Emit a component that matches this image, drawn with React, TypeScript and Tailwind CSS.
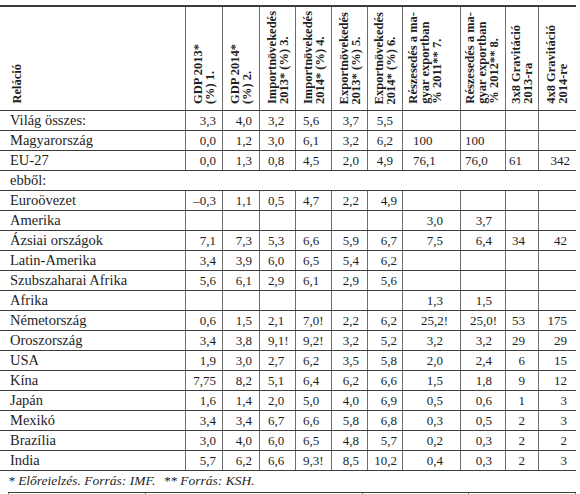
import React from "react";

const wClasses = [
  "w-[185px]",
  "w-[37px]",
  "w-[37px]",
  "w-[36px]",
  "w-[36px]",
  "w-[36px]",
  "w-[35px]",
  "w-[58px]",
  "w-[45px]",
  "w-[33px]",
  "w-[38px]",
];

const headers: string[][] = [
  ["Reláció"],
  ["GDP 2013*", "(%) 1."],
  ["GDP 2014*", "(%) 2."],
  ["Importnövekedés", "2013* (%) 3."],
  ["Importnövekedés", "2014* (%) 4."],
  ["Exportnövekedés", "2013* (%) 5."],
  ["Exportnövekedés", "2014* (%) 6."],
  ["Részesedés a ma-", "gyar exportban", "% 2011** 7."],
  ["Részesedés a ma-", "gyar exportban", "% 2012** 8."],
  ["3x8 Gravitáció", "2013-ra"],
  ["4x8 Gravitáció", "2014-re"],
];

const headerPos = [
  "pl-[11px]",
  "justify-center",
  "justify-center",
  "justify-center",
  "justify-center",
  "justify-center",
  "justify-center",
  "pl-[4px]",
  "pl-[3px]",
  "pl-[4px]",
  "pl-[6px]",
];

type Row = { name: string; vals?: string[] };

const rows: Row[] = [
  { name: "Világ összes:", vals: ["3,3", "4,0", "3,2", "5,6", "3,7", "5,5", "", "", "", ""] },
  { name: "Magyarország", vals: ["0,0", "1,2", "3,0", "6,1", "3,2", "6,2", "100", "100", "", ""] },
  { name: "EU-27", vals: ["0,0", "1,3", "0,8", "4,5", "2,0", "4,9", "76,1", "76,0", "61", "342"] },
  { name: "ebből:" },
  { name: "Euroövezet", vals: ["–0,3", "1,1", "0,5", "4,7", "2,2", "4,9", "", "", "", ""] },
  { name: "Amerika", vals: ["", "", "", "", "", "", "3,0", "3,7", "", ""] },
  { name: "Ázsiai országok", vals: ["7,1", "7,3", "5,3", "6,6", "5,9", "6,7", "7,5", "6,4", "34", "42"] },
  { name: "Latin-Amerika", vals: ["3,4", "3,9", "6,0", "6,5", "5,4", "6,2", "", "", "", ""] },
  { name: "Szubszaharai Afrika", vals: ["5,6", "6,1", "2,9", "6,1", "2,9", "5,6", "", "", "", ""] },
  { name: "Afrika", vals: ["", "", "", "", "", "", "1,3", "1,5", "", ""] },
  { name: "Németország", vals: ["0,6", "1,5", "2,1", "7,0!", "2,2", "6,2", "25,2!", "25,0!", "53", "175"] },
  { name: "Oroszország", vals: ["3,4", "3,8", "9,1!", "9,2!", "3,2", "5,2", "3,2", "3,2", "29", "29"] },
  { name: "USA", vals: ["1,9", "3,0", "2,7", "6,2", "3,5", "5,8", "2,0", "2,4", "6", "15"] },
  { name: "Kína", vals: ["7,75", "8,2", "5,1", "6,4", "6,2", "6,6", "1,5", "1,8", "9", "12"] },
  { name: "Japán", vals: ["1,6", "1,4", "2,0", "5,0", "4,0", "6,9", "0,5", "0,6", "1", "3"] },
  { name: "Mexikó", vals: ["3,4", "3,4", "6,7", "6,6", "5,8", "6,8", "0,3", "0,5", "2", "3"] },
  { name: "Brazília", vals: ["3,0", "4,0", "6,0", "6,5", "4,8", "5,7", "0,2", "0,3", "2", "2"] },
  { name: "India", vals: ["5,7", "6,2", "6,6", "9,3!", "8,5", "10,2", "0,4", "0,3", "2", "3"] },
];

// alignment per value column (index 0 = column 1)
const colAlign = [
  "justify-end pr-[6px]",
  "justify-end pr-[7px]",
  "justify-start pl-[8px]",
  "justify-start pl-[7px]",
  "justify-end pr-[8px]",
  "justify-end pr-[5px]",
  "justify-end pr-[17px]",
  "justify-end pr-[13px]",
  "justify-end pr-[13px]",
  "justify-end pr-[9px]",
];

const overrides: Record<number, Record<number, string>> = {
  0: { 5: "justify-end pr-[9px]" },
  1: { 5: "justify-end pr-[9px]", 6: "justify-start pl-[10px]", 7: "justify-start pl-[4px]" },
  2: {
    5: "justify-end pr-[9px]",
    6: "justify-start pl-[10px]",
    7: "justify-start pl-[4px]",
    8: "justify-start pl-[3px]",
    9: "justify-end pr-[6px]",
  },
};

function Val({ v, right }: { v: string; right: boolean }) {
  if (v.endsWith("!") && right) {
    return (
      <span>
        {v.slice(0, -1)}
        <span className="mr-[-5px]">!</span>
      </span>
    );
  }
  return <span>{v}</span>;
}

export default function App() {
  return (
    <div className="w-[580px] h-[494px] overflow-hidden bg-white pt-[5px] font-['Liberation_Serif','Times_New_Roman',serif] text-[#1e1e1e]">
      <div className="w-[576px]">
        {/* header */}
        <div className="flex h-[106px] border-t-2 border-b border-[#3c3c3c]">
          {headers.map((lines, i) => (
            <div
              key={i}
              className={`${wClasses[i]} shrink-0 flex items-end pb-[6px] ${headerPos[i]} ${
                i === 0 ? "" : "border-l border-[#6e6e6e]"
              }`}
            >
              <div className="[writing-mode:vertical-rl] rotate-180 font-bold text-[12.5px] leading-[12px] whitespace-nowrap">
                {lines.map((l, j) => (
                  <div key={j}>{l}</div>
                ))}
              </div>
            </div>
          ))}
        </div>
        {/* body */}
        {rows.map((r, ri) => {
          if (!r.vals) {
            return (
              <div
                key={ri}
                className="flex h-[20px] items-center border-b border-[#3c3c3c] pl-[10px] text-[14.5px]"
              >
                {r.name}
              </div>
            );
          }
          return (
            <div key={ri} className="flex h-[20px] border-b border-[#3c3c3c]">
              <div className="w-[185px] shrink-0 flex items-center pl-[10px] text-[14.5px] whitespace-nowrap">
                {r.name}
              </div>
              {r.vals.map((v, j) => {
                const align = overrides[ri]?.[j] ?? colAlign[j];
                const right = align.startsWith("justify-end");
                return (
                  <div
                    key={j}
                    className={`${wClasses[j + 1]} shrink-0 flex items-center border-l border-[#6e6e6e] text-[13px] whitespace-nowrap ${align}`}
                  >
                    {v && <Val v={v} right={right} />}
                  </div>
                );
              })}
            </div>
          );
        })}
      </div>
      {/* footnote */}
      <div className="h-[21px] flex items-center pl-[8px] italic text-[13.5px] whitespace-nowrap">
        <span>* Előreielzés. Forrás: IMF.</span>
        <span className="ml-[8px]">** Forrás: KSH.</span>
      </div>
      {/* start of the next table */}
      <div className="ml-[8px] w-[568px] flex border-t border-[#3c3c3c] h-[3px]">
        <div className="w-[137px] border-l border-[#6e6e6e]" />
        <div className="w-[217px] border-l border-[#6e6e6e]" />
        <div className="w-[106px] border-l border-[#6e6e6e]" />
        <div className="w-[108px] border-l border-r border-[#6e6e6e]" />
      </div>
    </div>
  );
}
